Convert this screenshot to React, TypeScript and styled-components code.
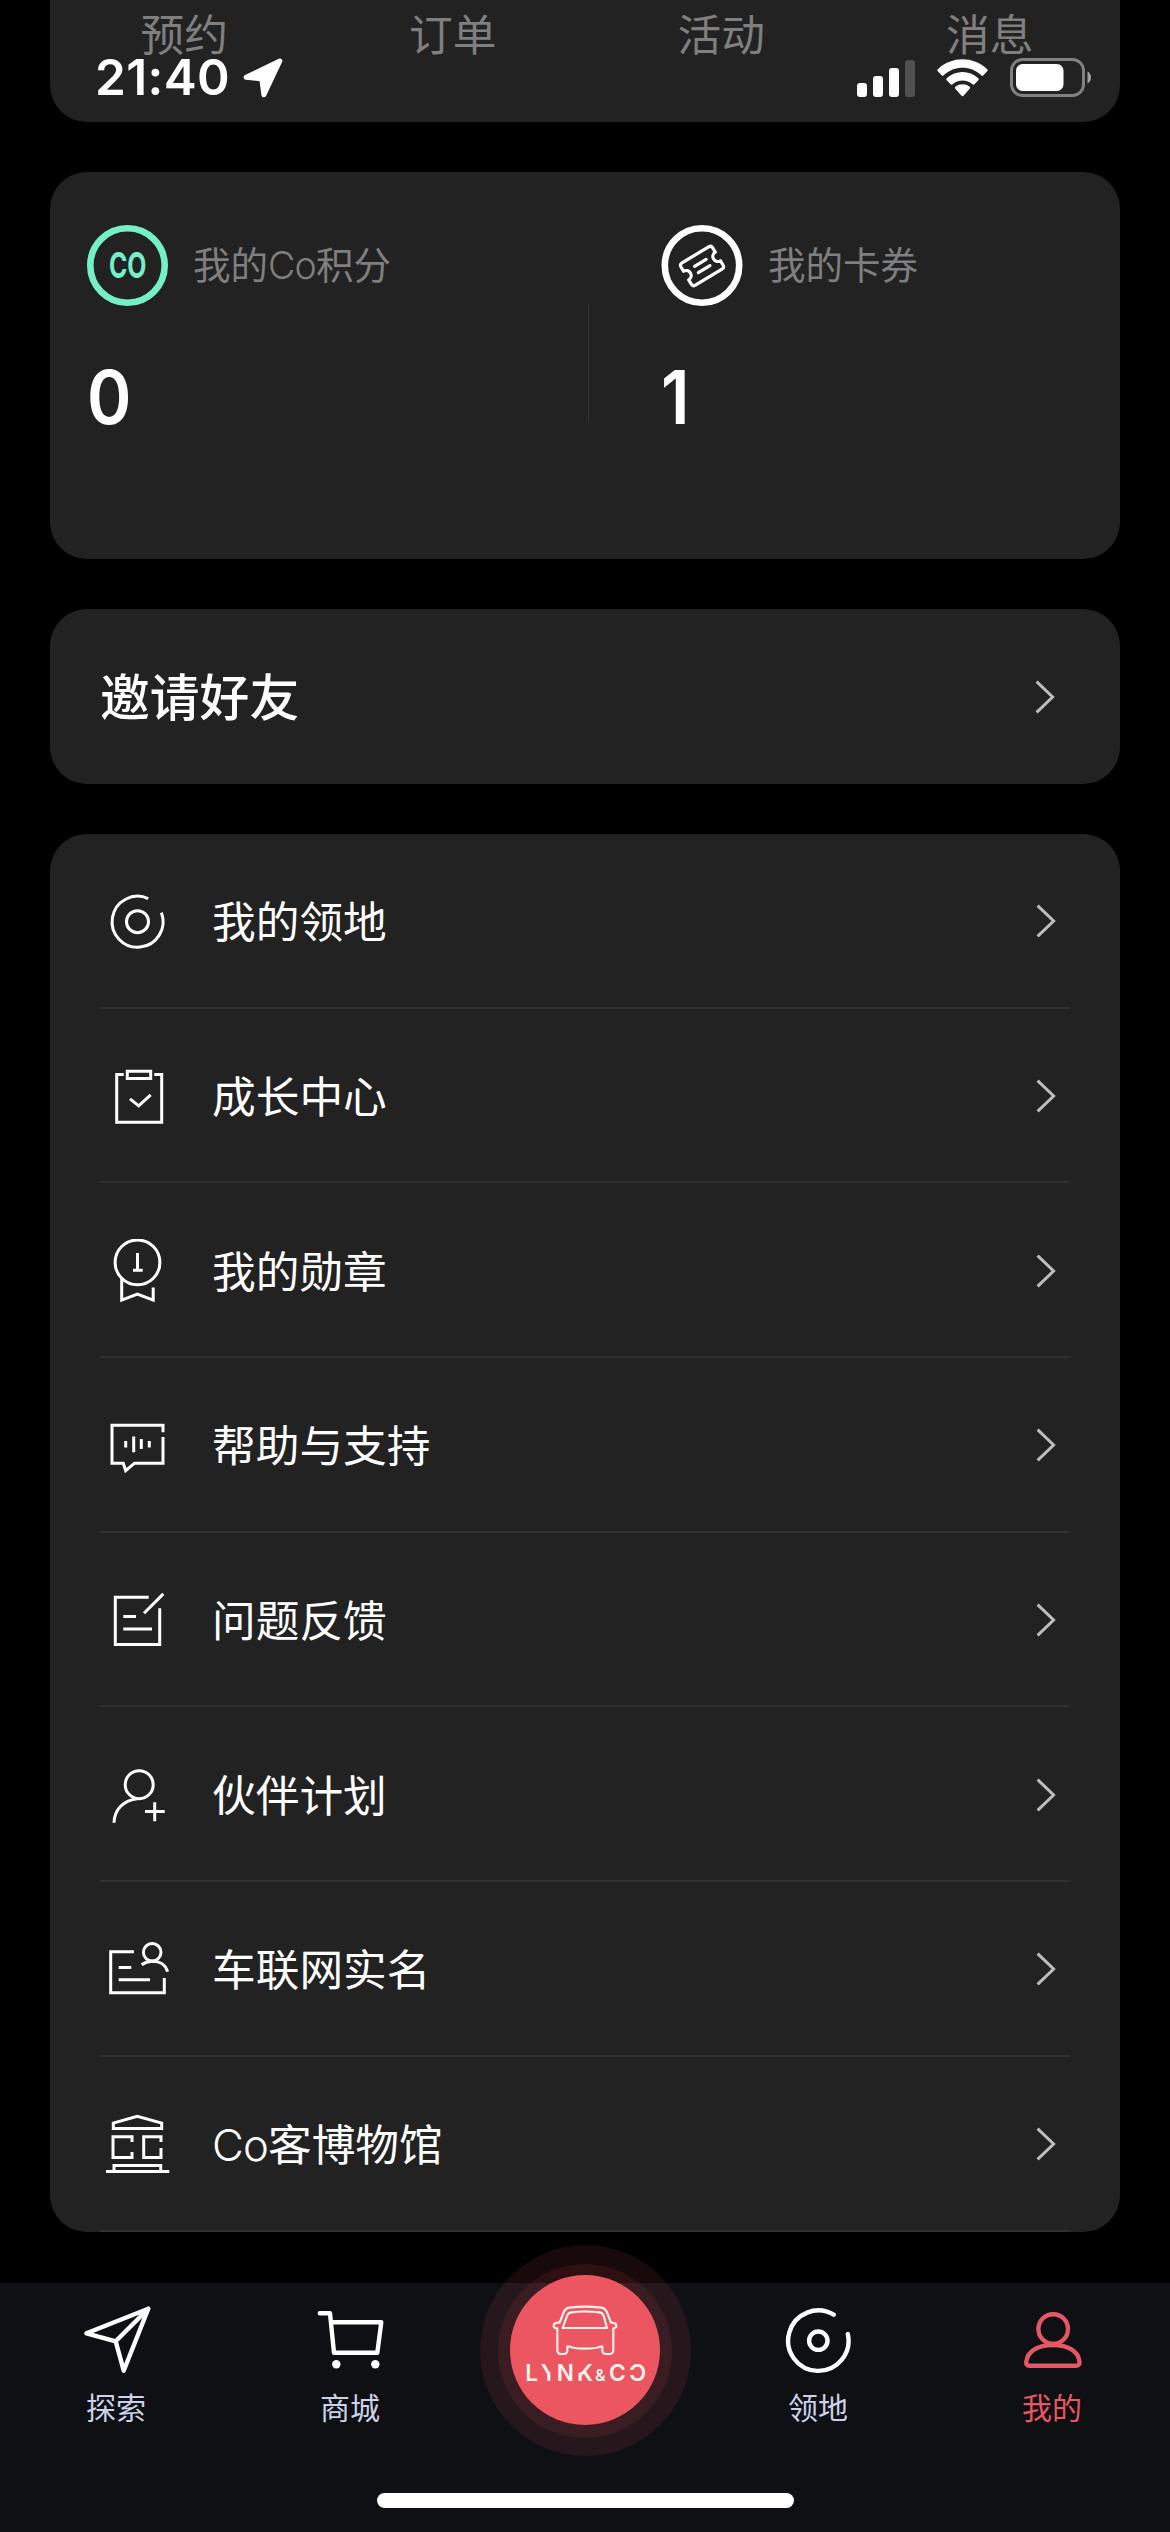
import React from "react";
import styled, { createGlobalStyle } from "styled-components";

const GlobalStyle = createGlobalStyle`
  * { box-sizing: border-box; }
  body {
    margin: 0;
    background: #000;
    font-family: Inter, "Noto Sans CJK SC", sans-serif;
    -webkit-font-smoothing: antialiased;
  }
`;

const Screen = styled.div`
  position: relative;
  width: 1170px;
  height: 2532px;
  overflow: hidden;
  background: #000;
  display: flex;
  flex-direction: column;
  justify-content: space-between;
`;

const Feed = styled.main`
  display: flex;
  flex-direction: column;
  gap: 50px;
  padding: 0 50px;
`;

const Card = styled.section`
  background: #222;
  border-radius: 37px;
`;

/* Order shortcuts, scrolled up beneath the status bar */
const ShortcutCard = styled(Card)`
  height: 122px;
  border-radius: 0 0 37px 37px;
  display: grid;
  grid-template-columns: repeat(4, 268.5px);
`;

const Shortcut = styled.span`
  text-align: center;
  font-size: 43.7px;
  line-height: 64px;
  padding-top: 4px;
  color: #7f7f7f;
`;

const StatusBar = styled.header`
  position: absolute;
  inset: 0 0 auto 0;
  height: 122px;
  padding: 0 79px 0 95px;
  display: flex;
  justify-content: space-between;
  color: #fff;
`;

const StatusGroup = styled.div`
  display: flex;
  align-items: center;
  height: 39px;
  margin-top: 58px;
`;

const Clock = styled.time`
  font-size: 49.5px;
  font-weight: 600;
  line-height: 39px;
  letter-spacing: 0.4px;
  width: 148px;
  white-space: nowrap;
`;

const StatusIcon = styled.svg<{ $gap?: number }>`
  display: block;
  margin-left: ${(p) => p.$gap ?? 0}px;
`;

const PointsCard = styled(Card)`
  height: 387px;
  display: flex;
  padding: 53px 37px 0;
`;

const Stat = styled.div<{ $width: number }>`
  width: ${(p) => p.$width}px;
`;

const StatHead = styled.div`
  display: flex;
  align-items: center;
  gap: 25px;
  height: 81px;
`;

const StatLabel = styled.span`
  font-size: 37.5px;
  line-height: 56px;
  padding-top: 1px;
  color: #7f7f7f;
`;

const Latin = styled.span`
  font-weight: 300;
  letter-spacing: -0.02em;
`;

const StatValue = styled.div`
  margin-top: 46px;
  font-size: 74px;
  font-weight: 600;
  line-height: 90px;
  color: #fff;
  transform: scaleX(0.91);
  transform-origin: 0 50%;
`;

const StatDivider = styled.div`
  width: 1px;
  height: 119px;
  margin: 79px 72px 0 0;
  background: #323232;
`;

const InviteCard = styled(Card)`
  height: 175px;
  display: flex;
  align-items: center;
  justify-content: space-between;
  padding: 0 65px 0 50px;
`;

const InviteTitle = styled.span`
  font-size: 49.8px;
  line-height: 72px;
  padding-top: 2px;
  font-weight: 500;
  color: #fff;
`;

const ListCard = styled(Card)`
  padding: 0 50px;
  overflow: hidden;
`;

const Row = styled.div`
  height: 174.7px;
  padding: 2px 14px 0 6px;
  border-bottom: 2px solid #303030;
  display: flex;
  align-items: center;
`;

const RowLabel = styled.span`
  flex: 1;
  margin-left: 42px;
  padding-top: 4px;
  font-size: 43.7px;
  line-height: 64px;
  color: #fff;
`;

const LineIcon = styled.svg`
  display: block;
  fill: none;
  stroke: #fff;
  stroke-width: 3;
`;

const ChevronIcon = styled(LineIcon)`
  stroke: #bdbdbd;
`;

const TabBar = styled.nav`
  position: relative;
  height: 249px;
  background: #0f1014;
  display: grid;
  grid-template-columns: repeat(5, 234px);
`;

const Tab = styled.div<{ $active?: boolean }>`
  display: flex;
  flex-direction: column;
  align-items: center;
  padding-top: 23px;
  color: ${(p) => (p.$active ? "#e95763" : "#ccd2e8")};
`;

const TabIcon = styled.svg<{ $active?: boolean }>`
  display: block;
  fill: none;
  stroke: ${(p) => (p.$active ? "#e35766" : "#fff")};
  stroke-width: 4.4;
  stroke-linecap: round;
  stroke-linejoin: round;
`;

const TabLabel = styled.span`
  margin: 12px 2px 0 0;
  font-size: 30px;
  line-height: 44px;
`;

const Halo = styled.div<{ $size: number }>`
  width: ${(p) => p.$size}px;
  height: ${(p) => p.$size}px;
  border-radius: 50%;
  background: rgba(236, 88, 99, 0.1);
  display: flex;
  align-items: center;
  justify-content: center;
  flex: none;
`;

const CarButton = styled(Halo)`
  background: #eb5660;
  margin-bottom: 2px;
`;

const HaloSlot = styled.div`
  display: flex;
  justify-content: center;
  margin-top: -38px;
`;

const HomeIndicator = styled.div`
  position: absolute;
  left: 377px;
  bottom: 24px;
  width: 417px;
  height: 15px;
  border-radius: 8px;
  background: #fff;
`;

const Chevron = () => (
  <ChevronIcon width="20" height="34" viewBox="0 0 20 34">
    <path d="M1.6 1.6 17.6 17 1.6 32.4" />
  </ChevronIcon>
);

const rows: { id: string; label: React.ReactNode; icon: React.ReactNode }[] = [
  {
    id: "domain",
    label: "我的领地",
    icon: (
      <>
        <path d="M42.2 9.55A25.5 25.5 0 1 0 55.4 23.65" />
        <circle cx="31.5" cy="32.65" r="11" />
      </>
    ),
  },
  {
    id: "growth",
    label: "成长中心",
    icon: (
      <>
        <path d="M17.7 10.6h-7v47.7h45V10.6h-7.4" />
        <path d="M21.3 7.3h23.4v7.3H21.3z" />
        <path d="M24 34.8 32.7 41.8 44.7 30.8" />
      </>
    ),
  },
  {
    id: "medals",
    label: "我的勋章",
    icon: (
      <>
        <circle cx="31.5" cy="23.4" r="22.4" />
        <path d="M31.5 14v17.3M27 31.3h9.7" />
        <path d="M15.7 38.5v22.6l15.7-6 15.8 6V48.6" />
      </>
    ),
  },
  {
    id: "support",
    label: "帮助与支持",
    icon: (
      <>
        <path d="M57 19.2v-7H6v38h11.3l2.4 7.4 8.8-7.4H57V23.9" />
        <path d="M19.7 27.9v6.6M27.7 23.5v15.7M35.3 25.9v10M43.3 27.9v6.6" />
      </>
    ),
  },
  {
    id: "feedback",
    label: "问题反馈",
    icon: (
      <>
        <path d="M42.7 9.2H9.3v47.3h44.4V20.2" />
        <path d="M57.3 5.9 38 25.2M17.3 28.5H30M17.3 40.9H46" />
      </>
    ),
  },
  {
    id: "partner",
    label: "伙伴计划",
    icon: (
      <>
        <circle cx="33.2" cy="21.65" r="14" />
        <path d="M31.5 35.7C18 37 8.5 46 8 59.8M48.7 39.2v19M39 48.5h19.7" />
      </>
    ),
  },
  {
    id: "identity",
    label: "车联网实名",
    icon: (
      <>
        <path d="M28 14.8H4.7v41h53.6V41.1M12.7 30.5h12.6M12.7 42.8H44" />
        <circle cx="46.2" cy="15.3" r="8.8" />
        <path d="M35.7 27.8Q40 24.5 46.2 24.3C54 24.3 60 28 61.5 34.8" />
      </>
    ),
  },
  {
    id: "museum",
    label: (
      <>
        <Latin>Co</Latin>客博物馆
      </>
    ),
    icon: (
      <>
        <path d="M7.3 16.4v-5.3l24-6.9 24.4 6.9v5.3z" />
        <path d="M26 30.1v-5.35H7v20.65h19v-5.3M55 30.1v-5.35H37.7v20.65H55V36" />
        <path d="M8 59.4v-6h46.7v6M0 59.4h63.3" />
      </>
    ),
  },
];

const LocationArrow = () => (
  <StatusIcon width="40" height="40" viewBox="0 0 40 40">
    <path
      d="M36.8 3 3.2 19.3 18.8 20.9 20.9 36.8Z"
      fill="#fff"
      stroke="#fff"
      strokeWidth="5"
      strokeLinejoin="round"
    />
  </StatusIcon>
);

const Signal = () => (
  <StatusIcon width="58" height="38" viewBox="0 0 58 38">
    <rect x="0" y="24" width="10" height="14" rx="3" fill="#fff" />
    <rect x="16" y="17" width="10" height="21" rx="3" fill="#fff" />
    <rect x="32" y="9" width="10" height="29" rx="3" fill="#fff" />
    <rect x="48" y="1" width="10" height="37" rx="3" fill="#515151" />
  </StatusIcon>
);

const Wifi = () => (
  <StatusIcon $gap={22} width="51" height="38" viewBox="0 0 51 38">
    <path
      d="M.8 12.3a1.5 1.5 0 0 1 0-2.1C15-3 36-3 50.2 10.2a1.5 1.5 0 0 1 0 2.1l-3.8 3.9a1.5 1.5 0 0 1-2.1 0C33.5 6.3 17.5 6.3 6.7 16.2a1.5 1.5 0 0 1-2.1 0z"
      fill="#fff"
    />
    <path
      d="M9.7 21.3a1.5 1.5 0 0 1 0-2.1C18.8 11 32.2 11 41.3 19.2a1.5 1.5 0 0 1 0 2.1L37.4 25.2a1.5 1.5 0 0 1-2 0C29.7 20.2 21.3 20.2 15.6 25.2a1.5 1.5 0 0 1-2 0z"
      fill="#fff"
    />
    <path
      d="M18.3 29.7a1.4 1.4 0 0 1 0-2C22.4 24.4 28.6 24.4 32.7 27.7a1.4 1.4 0 0 1 0 2L26.5 36.7a1.4 1.4 0 0 1-2 0z"
      fill="#fff"
    />
  </StatusIcon>
);

const Battery = () => (
  <StatusIcon $gap={22} width="81" height="39" viewBox="0 0 81 39">
    <rect x="1.5" y="1.5" width="72" height="36" rx="11" fill="none" stroke="#818181" strokeWidth="3" />
    <rect x="6" y="6" width="47.5" height="27" rx="6.5" fill="#fff" />
    <path d="M77.500 13.5q3.500 1.8 3.500 6t-3.500 6z" fill="#a0a0a0" />
  </StatusIcon>
);

const CoinIcon = () => (
  <svg width="81" height="81" viewBox="0 0 81 81">
    <circle cx="40.5" cy="40.5" r="37.2" fill="none" stroke="#74efc8" strokeWidth="6.6" />
    <text
      x="22"
      y="53.3"
      fontSize="35.2"
      fontWeight="700"
      fill="#74efc8"
      textLength="37.5"
      lengthAdjust="spacingAndGlyphs"
      fontFamily="Inter, sans-serif"
    >
      CO
    </text>
  </svg>
);

const TicketIcon = () => (
  <svg width="82" height="81" viewBox="0 0 82 81" fill="none" stroke="#fff">
    <circle cx="41" cy="40.5" r="37.2" strokeWidth="6.6" />
    <g transform="translate(41 41) rotate(-31)" strokeWidth="3.2" strokeLinejoin="round" strokeLinecap="round">
      <path d="M-15.5 -13H15.5Q18.500 -13 18.500 -10V-5A5 5 0 0 0 18.500 5V10Q18.500 13 15.5 13H-15.5Q-18.500 13 -18.500 10V5A5 5 0 0 0 -18.500 -5V-10Q-18.500 -13 -15.5 -13Z" />
      <path d="M-6.5 -3.6H7M-6.5 3.8H7" />
    </g>
  </svg>
);

const CarLogo = () => (
  <svg width="150" height="150" viewBox="210 162 450 450" fill="none" stroke="#fff3ee" strokeWidth="6.5" strokeLinejoin="round">
    <path d="M352 322V384Q352 399 362 399H371Q382 399 382 388V377H390Q400 383 435 383T480 377H487V388Q487 399 498 399H508Q520 399 520 386V322Q530 321 529 313T513 305L501 274Q496 262 484 260Q435 254 388 260Q376 262 371 274L359 305Q342 304 341 313T352 322Z" />
    <path d="M368 321H501L491 285Q488 275 479 274Q435 269 394 274Q384 275 381 285Z" />
    <g fill="#fff3ee" stroke="none" fontFamily="Inter, sans-serif" fontSize="68" fontWeight="600">
      <text x="256 302 350 411" y="480">LYNK</text>
      <text x="465" y="480" fontSize="48">&amp;</text>
      <text x="507 566" y="480">CO</text>
    </g>
    {/* openings cut into the Y, K and O of the wordmark */}
    <g fill="#eb5660" stroke="none">
      <path d="M326.500 427H351V463H331.500V457L326.500 448Z" />
      <path d="M409 427H427V451L418 456H409Z" />
      <path d="M562 447H583V462H562Z" />
    </g>
  </svg>
);

export default function App() {
  return (
    <>
      <GlobalStyle />
      <Screen>
        <Feed>
          <ShortcutCard>
            <Shortcut>预约</Shortcut>
            <Shortcut>订单</Shortcut>
            <Shortcut>活动</Shortcut>
            <Shortcut>消息</Shortcut>
          </ShortcutCard>

          <PointsCard>
            <Stat $width={501}>
              <StatHead>
                <CoinIcon />
                <StatLabel>
                  我的<Latin>Co</Latin>积分
                </StatLabel>
              </StatHead>
              <StatValue>0</StatValue>
            </Stat>
            <StatDivider />
            <Stat $width={400}>
              <StatHead>
                <TicketIcon />
                <StatLabel>我的卡券</StatLabel>
              </StatHead>
              <StatValue>1</StatValue>
            </Stat>
          </PointsCard>

          <InviteCard>
            <InviteTitle>邀请好友</InviteTitle>
            <Chevron />
          </InviteCard>

          <ListCard>
            {rows.map((row) => (
              <Row key={row.id}>
                <LineIcon width="64" height="64" viewBox="0 0 64 64">
                  {row.icon}
                </LineIcon>
                <RowLabel>{row.label}</RowLabel>
                <Chevron />
              </Row>
            ))}
          </ListCard>
        </Feed>

        <TabBar>
          <Tab>
            <TabIcon width="68" height="68" viewBox="0 0 68 68">
              <path d="M3.5 27.3 65.3 2.7 40.7 64.7 32.7 35.3ZM32.7 35.3 65.3 2.7" />
            </TabIcon>
            <TabLabel>探索</TabLabel>
          </Tab>
          <Tab>
            <TabIcon width="68" height="68" viewBox="0 0 68 68">
              <path d="M2.8 7.3H13L17 46.7H60.3L64.3 16.3H14.3" />
              <circle cx="19.3" cy="58.3" r="4.2" fill="#fff" stroke="none" />
              <circle cx="58.3" cy="58.3" r="4.2" fill="#fff" stroke="none" />
            </TabIcon>
            <TabLabel>商城</TabLabel>
          </Tab>
          <HaloSlot>
            <Halo $size={211}>
              <Halo $size={174}>
                <CarButton $size={150}>
                  <CarLogo />
                </CarButton>
              </Halo>
            </Halo>
          </HaloSlot>
          <Tab>
            <TabIcon width="68" height="68" viewBox="0 0 68 68">
              <path d="M48.7 8.7A30.2 30.2 0 1 0 62.8 28.1" />
              <circle cx="33.3" cy="34.7" r="9.2" />
            </TabIcon>
            <TabLabel>领地</TabLabel>
          </Tab>
          <Tab $active>
            <TabIcon $active width="68" height="68" viewBox="0 0 68 68">
              <circle cx="34.2" cy="23" r="14.8" />
              <path d="M11 59.8Q7 59.8 7.2 56C8.5 45 19 39 34 39S59.5 45 60.5 56Q60.7 59.8 57 59.8Z" />
            </TabIcon>
            <TabLabel>我的</TabLabel>
          </Tab>
          <HomeIndicator />
        </TabBar>

        <StatusBar>
          <StatusGroup>
            <Clock>21:40</Clock>
            <LocationArrow />
          </StatusGroup>
          <StatusGroup>
            <Signal />
            <Wifi />
            <Battery />
          </StatusGroup>
        </StatusBar>
      </Screen>
    </>
  );
}
